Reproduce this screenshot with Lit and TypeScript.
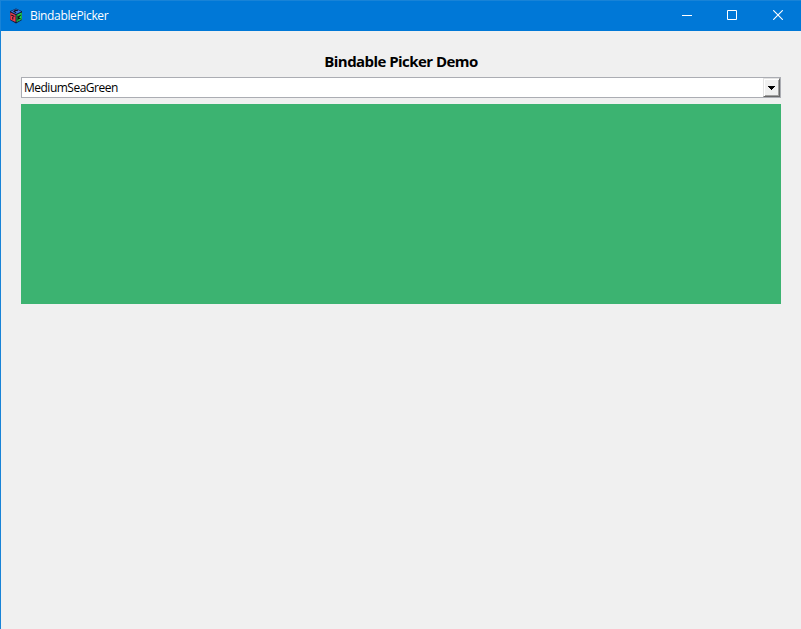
import { LitElement, html, css } from "lit";
import { customElement, property } from "lit/decorators.js";

@customElement("title-bar")
class TitleBar extends LitElement {
  @property() caption = "";

  static styles = css`
    :host {
      display: flex;
      align-items: center;
      box-sizing: border-box;
      height: 31px;
      flex: none;
      background: #0078d7;
      border-top: 1px solid #1883d7;
      color: #fff;
    }
    svg { display: block; }
    .logo { margin-left: 7px; width: 16px; height: 16px; }
    .caption {
      flex: 1;
      margin-left: 6px;
      font: 12px/16px "Open Sans", "Noto Sans", sans-serif;
      letter-spacing: -0.35px;
      white-space: nowrap;
    }
    .controls { display: flex; height: 100%; }
    .control {
      display: flex;
      align-items: center;
      justify-content: center;
      width: 45px;
      height: 28px;
    }
    .close { width: 46px; margin-left: 1px; }
  `;

  render() {
    return html`
      <svg class="logo" viewBox="0 0 16 16">
        <path d="M8 0.5 L14 3.2 V12 L8 15.5 L2 12 V3.2Z" fill="#101c3c" />
        <path d="M8 1 L13.2 3.4 L8 6 L2.8 3.4Z" fill="#3f78e8" />
        <path d="M2.3 4.6 L7.5 7 V14 L2.3 11.4Z" fill="#f03c4c" />
        <path d="M13.7 4.6 L8.6 7 V14 L13.7 11.4Z" fill="#1ee04c" />
        <path d="M9.8 2.6 L7.6 2.2 L6 3.5 L8.2 4.7 M3.2 7 L6.4 8.5 M4.8 7.8 V11.6 M9.9 7.6 V12.4 M12.6 6.8 L10.2 9.8 L12.6 11"
          fill="none" stroke="#101420" stroke-width="1.1" />
      </svg>
      <span class="caption">${this.caption}</span>
      <div class="controls">
        <div class="control">
          <svg width="10" height="10" stroke="#fff"><path d="M0 5.5H10" /></svg>
        </div>
        <div class="control">
          <svg width="10" height="10" fill="none" stroke="#fff"><path d="M.5 .5h9v9h-9z" /></svg>
        </div>
        <div class="control close">
          <svg width="10" height="10" stroke="#fff" stroke-width="1.1"><path d="M.2 .2L9.8 9.8M9.8 .2L.2 9.8" /></svg>
        </div>
      </div>
    `;
  }
}

@customElement("combo-box")
class ComboBox extends LitElement {
  @property() value = "";

  static styles = css`
    :host {
      display: flex;
      box-sizing: border-box;
      height: 21px;
      background: #fff;
      border: 1px solid #abadb3;
    }
    .value {
      flex: 1;
      padding-left: 2px;
      font: 12px/19px "Open Sans", "Noto Sans", sans-serif;
      letter-spacing: -0.5px;
      color: #000;
    }
    .arrow {
      display: flex;
      align-items: center;
      justify-content: center;
      box-sizing: border-box;
      width: 17px;
      height: 19px;
      background: #f0f0f0;
      border: 1px solid;
      border-color: #e3e3e3 #696969 #696969 #e3e3e3;
      box-shadow: inset 1px 1px #fff, inset -1px -1px #a0a0a0;
    }
    svg { display: block; }
  `;

  render() {
    return html`
      <span class="value">${this.value}</span>
      <div class="arrow">
        <svg width="7" height="4" shape-rendering="crispEdges"><path d="M0 0h7v1h-1v1h-1v1h-1v1h-1v-1h-1v-1h-1v-1h-1z" /></svg>
      </div>
    `;
  }
}

@customElement("app-root")
class AppRoot extends LitElement {
  static styles = css`
    :host {
      display: flex;
      flex-direction: column;
      box-sizing: border-box;
      height: 100vh;
      background: #f0f0f0;
      border-left: 1px solid #1883d7;
    }
    .content {
      display: flex;
      flex-direction: column;
      padding: 20px 20px 0;
    }
    .heading {
      margin: 0;
      height: 26px;
      text-align: center;
      font: bold 15px/20px "Open Sans", "Noto Sans", sans-serif;
      letter-spacing: -0.55px;
      color: #000;
    }
    .swatch { height: 200px; margin-top: 6px; background: #3cb371; }
  `;

  render() {
    return html`
      <title-bar caption="BindablePicker"></title-bar>
      <main class="content">
        <h1 class="heading">Bindable Picker Demo</h1>
        <combo-box value="MediumSeaGreen"></combo-box>
        <div class="swatch"></div>
      </main>
    `;
  }
}
